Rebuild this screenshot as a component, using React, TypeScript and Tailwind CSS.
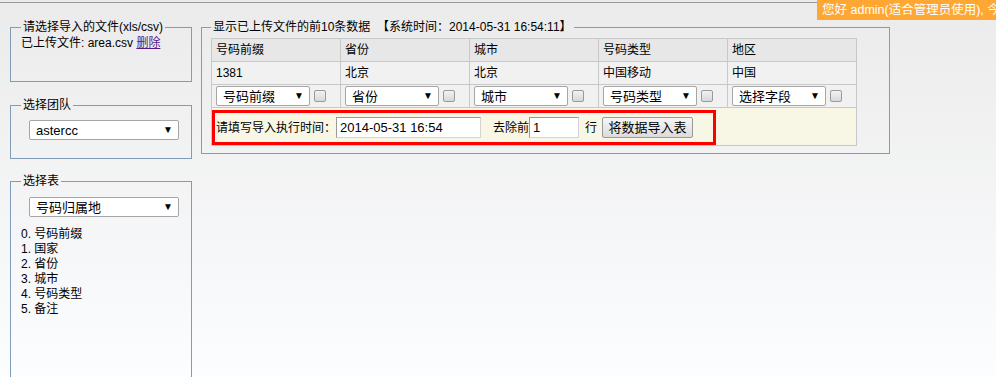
import React from "react";

const columns = [
  { head: "号码前缀", value: "1381", pick: "号码前缀" },
  { head: "省份", value: "北京", pick: "省份" },
  { head: "城市", value: "北京", pick: "城市" },
  { head: "号码类型", value: "中国移动", pick: "号码类型" },
  { head: "地区", value: "中国", pick: "选择字段" },
];

const fields = ["0. 号码前缀", "1. 国家", "2. 省份", "3. 城市", "4. 号码类型", "5. 备注"];

function FakeSelect({ label, className }: { label: string; className: string }) {
  return (
    <div
      className={`flex items-center justify-between rounded-[2px] border border-[#a6a6a6] bg-white pl-[6px] pr-[5px] text-[13px] leading-none text-black ${className}`}
    >
      <span>{label}</span>
      <span className="text-[10px]">▼</span>
    </div>
  );
}

function Checkbox() {
  return (
    <div className="h-[12px] w-[12px] rounded-[2px] border border-[#9a9a9a] bg-gradient-to-b from-[#f2f2f2] to-[#d8d8d8]" />
  );
}

export default function App() {
  return (
    <div className="relative h-[377px] w-full overflow-hidden bg-gradient-to-b from-[#ebebeb] to-[#fcfdff] font-['Liberation_Sans','Noto_Sans_CJK_SC',sans-serif] text-[12px] text-black">
      {/* top strip */}
      <div className="h-[17px]">
        <div className="mt-[2px] h-px w-[817px] bg-[#999]" />
      </div>
      <div className="absolute right-0 top-0 flex h-[20px] w-[179px] items-center overflow-hidden whitespace-nowrap bg-[#ffa733] pl-[5px] text-[12.5px] text-white">
        您好 admin(适合管理员使用), 今天
      </div>

      <div className="flex gap-[9px] pl-[10px]">
        {/* left column */}
        <div className="flex w-[182px] flex-col">
          <fieldset className="h-[63px] border border-[#7f9db9] pl-[10px]">
            <legend className="px-[2px] leading-4">请选择导入的文件(xls/csv)</legend>
            <div className="leading-4">
              已上传文件: area.csv{" "}
              <a className="text-[#551a8b] underline">删除</a>
            </div>
          </fieldset>

          <fieldset className="mt-[15px] h-[62px] border border-[#7f9db9] pl-[10px]">
            <legend className="px-[2px] leading-4">选择团队</legend>
            <FakeSelect label="astercc" className="ml-[8px] mt-[7px] h-[20px] w-[150px]" />
          </fieldset>

          <fieldset className="mt-[14px] h-[230px] border border-[#7f9db9] pl-[10px]">
            <legend className="px-[2px] leading-4">选择表</legend>
            <FakeSelect label="号码归属地" className="ml-[8px] mt-[8px] h-[20px] w-[150px]" />
            <ul className="mt-[10px] leading-[15px]">
              {fields.map((f) => (
                <li key={f}>{f}</li>
              ))}
            </ul>
          </fieldset>
        </div>

        {/* right panel */}
        <fieldset className="h-[135px] w-[689px] border border-[#7f9db9] pl-[9px]">
          <legend className="px-[2px] leading-4">
            显示已上传文件的前10条数据 &nbsp;【系统时间：2014-05-31 16:54:11】
          </legend>
          <table className="mt-[3px] w-[646px] table-fixed border-collapse">
            <tbody>
              <tr className="h-[23px] bg-[#e7e7e7]">
                {columns.map((c) => (
                  <td key={c.head} className="w-[129px] border border-[#c8c8c8] px-[4px]">
                    {c.head}
                  </td>
                ))}
              </tr>
              <tr className="h-[23px] bg-[#f1f1f1]">
                {columns.map((c) => (
                  <td key={c.head} className="border border-[#c8c8c8] px-[4px]">
                    {c.value}
                  </td>
                ))}
              </tr>
              <tr className="h-[23px] bg-[#f1f1f1]">
                {columns.map((c) => (
                  <td key={c.head} className="border border-[#c8c8c8] px-[4px]">
                    <div className="flex items-center gap-[4px]">
                      <FakeSelect label={c.pick} className="h-[20px] w-[94px]" />
                      <Checkbox />
                    </div>
                  </td>
                ))}
              </tr>
              <tr className="bg-[#f8f7e5]">
                <td colSpan={5} className="border border-[#c8c8c8] p-0 pt-[2px]">
                  <div className="flex h-[35px] w-[504px] items-center border-[3px] border-[#ff0000] pl-[1px]">
                    <span>请填写导入执行时间：</span>
                    <div className="flex h-[21px] w-[145px] items-center border border-[#d4d4d4] border-l-[#9a9a9a] border-t-[#9a9a9a] bg-white pl-[3px] text-[13px]">
                      2014-05-31 16:54
                    </div>
                    <span className="ml-[12px]">去除前</span>
                    <div className="flex h-[21px] w-[50px] items-center border border-[#d4d4d4] border-l-[#9a9a9a] border-t-[#9a9a9a] bg-white pl-[3px] text-[13px]">
                      1
                    </div>
                    <span className="ml-[6px]">行</span>
                    <div className="ml-[5px] flex h-[21px] w-[91px] items-center justify-center rounded-[2px] border border-[#9a9a9a] bg-gradient-to-b from-[#f6f6f6] to-[#dcdcdc] text-[13px]">
                      将数据导入表
                    </div>
                  </div>
                </td>
              </tr>
            </tbody>
          </table>
        </fieldset>
      </div>
    </div>
  );
}
